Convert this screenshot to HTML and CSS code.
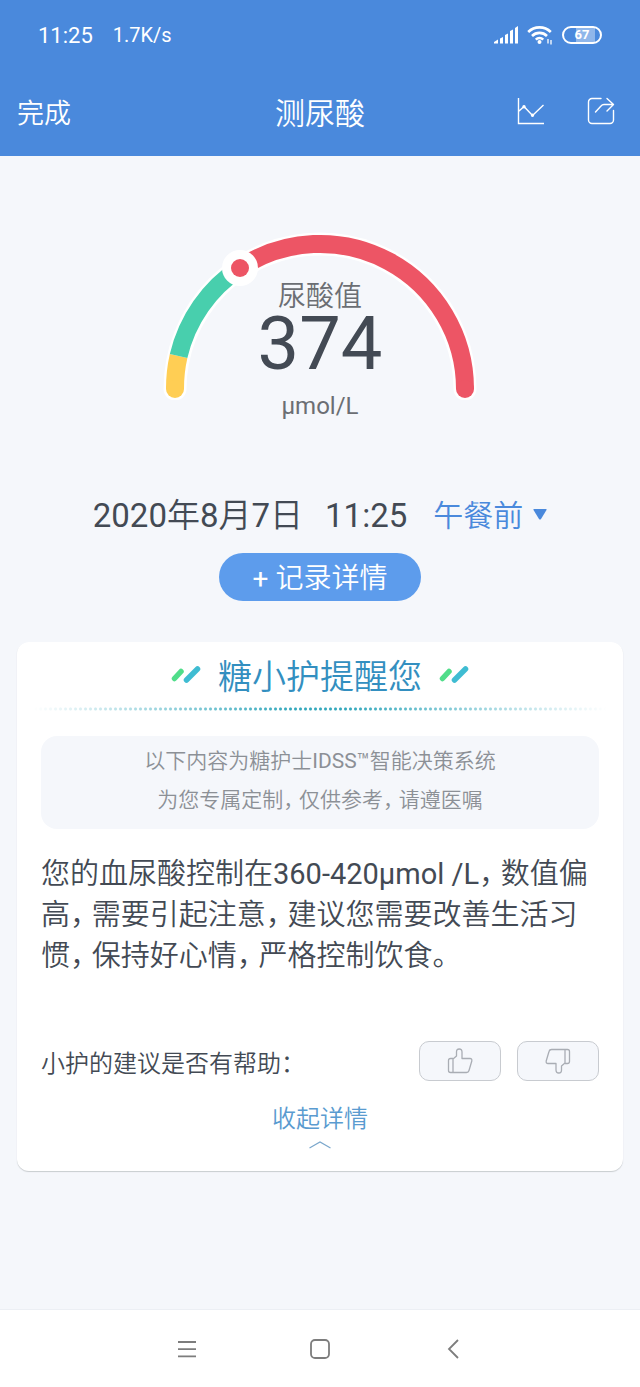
FILE: index.html
```html
<!DOCTYPE html>
<html lang="zh-CN">
  <head>
    <meta charset="UTF-8" />
    <meta name="viewport" content="width=device-width, initial-scale=1.0" />
    <title>测尿酸</title>
    <link rel="stylesheet" href="styles.css" />
  </head>
  <body>
    <header class="header">
      <div class="status-bar">
        <span class="status-time">11:25</span>
        <span class="status-speed">1.7K/s</span>
        <div class="status-icons">
          <svg width="24" height="18" viewBox="0 0 24 18" fill="#fff">
            <path d="M0 17.500v-1.500l4-2.500v4zM6 12.500l3-1.500v6.500H6zM11 9l3-1.500v10h-3zM16 5l3-1.500v14h-3zM21 2l3-2v17.500h-3z" />
          </svg>
          <svg width="26" height="20" viewBox="0 0 26 20" fill="none" stroke="#fff" stroke-width="2.600">
            <path d="M1.200 7a16 16 0 0 1 22.600 0M5 11a10.600 10.600 0 0 1 15 0M8.800 14.600a5.300 5.300 0 0 1 7.400 0" />
            <circle cx="12.500" cy="17" r="2" fill="#fff" stroke="none" />
            <path d="M21 14v4.500M24 15v4.500" stroke-width="1.300" />
          </svg>
          <span class="battery">67</span>
        </div>
      </div>

      <div class="title-bar">
        <button type="button" class="btn-done">完成</button>
        <h1 class="title">测尿酸</h1>
        <div class="title-actions">
          <button type="button" class="btn-icon" aria-label="趋势图">
            <svg width="28" height="28" viewBox="0 0 28 28" fill="none" stroke="#fff" stroke-width="1.400">
              <path d="M1.500 1v25.500H27M1.500 14.500l5.500-5 8.500 9L26.500 8" />
              <circle cx="7" cy="9.800" r="1" fill="#fff" />
              <circle cx="15.500" cy="18.300" r="1" fill="#fff" />
            </svg>
          </button>
          <button type="button" class="btn-icon" aria-label="分享">
            <svg width="28" height="28" viewBox="0 0 28 28" fill="none" stroke="#fff" stroke-width="1.400" stroke-linecap="round" stroke-linejoin="round">
              <path d="M14 1.500H5A3.500 3.500 0 0 0 1.500 5v18A3.500 3.500 0 0 0 5 26.500h18a3.500 3.500 0 0 0 3.500-3.500v-9.500" />
              <path d="M20 1.500l6.500 6L20 14M26 7.500H17a4 4 0 0 0-3 1.500l-5.500 6" />
            </svg>
          </button>
        </div>
      </div>
    </header>

    <main class="main">
      <section class="gauge">
        <svg width="320" height="180" viewBox="0 0 320 180" fill="none">
          <path d="M15 169a145 145 0 0 1 290 0" stroke="#fff" stroke-width="23" stroke-linecap="round" />
          <path d="M15 169a145 145 0 0 1 3.600-33" stroke="#ffce54" stroke-width="18" />
          <circle cx="15" cy="169" r="9" fill="#ffce54" />
          <path d="M18.600 136A145 145 0 0 1 80 48" stroke="#48cfad" stroke-width="18" />
          <path d="M80 48A145 145 0 0 1 305 169" stroke="#ed5565" stroke-width="18" />
          <circle cx="305" cy="169" r="9" fill="#ed5565" />
          <circle cx="80" cy="48" r="18" fill="#fff" />
          <circle cx="80" cy="48" r="9" fill="#ed5565" />
        </svg>
        <div class="gauge-text">
          <span class="gauge-name">尿酸值</span>
          <strong class="gauge-value">374</strong>
          <span class="gauge-unit">μmol/L</span>
        </div>
      </section>

      <div class="record">
        <time class="record-date">2020年8月7日</time>
        <time class="record-time">11:25</time>
        <label class="meal">
          <select class="meal-select" aria-label="时段">
            <option>午餐前</option>
            <option>午餐后</option>
          </select>
          <svg class="meal-arrow" width="14" height="11" viewBox="0 0 14 11" fill="#4a89dc">
            <path d="M1 0h12q1 0 .5 1L8 10q-1 1-2 0L.5 1Q0 0 1 0z" />
          </svg>
        </label>
      </div>
      <button type="button" class="btn-record">+ 记录详情</button>

      <section class="card">
        <div class="card-head">
          <svg width="30" height="18" viewBox="0 0 30 18" fill="none" stroke-width="5.500" stroke-linecap="round">
            <path d="M3.500 13.500L10 6.500" stroke="#50dd8a" />
            <path d="M15.500 15L26.500 4" stroke="#3fbcd2" />
          </svg>
          <h2 class="card-title">糖小护提醒您</h2>
          <svg width="30" height="18" viewBox="0 0 30 18" fill="none" stroke-width="5.500" stroke-linecap="round">
            <path d="M3.500 13.500L10 6.500" stroke="#50dd8a" />
            <path d="M15.500 15L26.500 4" stroke="#3fbcd2" />
          </svg>
        </div>
        <div class="dots"></div>

        <p class="notice">
          以下内容为糖护士IDSS™智能决策系统<br />
          为您专属定制， 仅供参考， 请遵医嘱
        </p>

        <p class="advice">
          您的血尿酸控制在360-420μmol /L， 数值偏高， 需要引起注意， 建议您需要改善生活习惯， 保持好心情， 严格控制饮食。
        </p>

        <div class="feedback">
          <span class="feedback-text">小护的建议是否有帮助：</span>
          <button type="button" class="btn-vote" aria-label="有帮助">
            <svg width="26" height="26" viewBox="0 0 26 26" fill="none" stroke="#a9adb4" stroke-width="1.300" stroke-linejoin="round">
              <path d="M6 10.500H3.500Q1.500 10.500 1.500 12.500V22.500Q1.500 24.500 3.500 24.500H19.500Q21.500 24.500 22 22.500L24.800 13Q25.200 10.500 23 10.500H15V4Q15 1 12.200 1T9.500 4V8L6 11V24.500" />
            </svg>
          </button>
          <button type="button" class="btn-vote" aria-label="没帮助">
            <svg class="icon-down" width="26" height="26" viewBox="0 0 26 26" fill="none" stroke="#a9adb4" stroke-width="1.300" stroke-linejoin="round">
              <path d="M6 10.500H3.500Q1.500 10.500 1.500 12.500V22.500Q1.500 24.500 3.500 24.500H19.500Q21.500 24.500 22 22.500L24.800 13Q25.200 10.500 23 10.500H15V4Q15 1 12.200 1T9.500 4V8L6 11V24.500" />
            </svg>
          </button>
        </div>

        <button type="button" class="btn-fold">
          收起详情
          <svg width="22" height="8" viewBox="0 0 22 8" fill="none" stroke="#7aa7cc" stroke-width="1.200">
            <path d="M.5 7L11 1l10.500 6" />
          </svg>
        </button>
      </section>
    </main>

    <nav class="nav">
      <button type="button" class="btn-icon" aria-label="菜单">
        <svg width="20" height="20" viewBox="0 0 20 20" stroke="#7d7d7d" stroke-width="1.800">
          <path d="M1 3h18M1 10.200h18M1 17.400h18" />
        </svg>
      </button>
      <button type="button" class="btn-icon" aria-label="主页">
        <svg width="20" height="20" viewBox="0 0 20 20" fill="none" stroke="#7d7d7d" stroke-width="1.800">
          <rect x="1" y="1" width="18" height="18" rx="4" />
        </svg>
      </button>
      <button type="button" class="btn-icon" aria-label="返回">
        <svg width="20" height="20" viewBox="0 0 20 20" fill="none" stroke="#7d7d7d" stroke-width="1.800">
          <path d="M15 1l-9 9 9 9" />
        </svg>
      </button>
    </nav>
  </body>
</html>
```
FILE: styles.css
```css
* {
  box-sizing: border-box;
  margin: 0;
  padding: 0;
}
body {
  display: flex;
  flex-direction: column;
  min-height: 100vh;
  background: #f5f7fb;
  color: #434a54;
  font-family: Roboto, "Noto Sans CJK SC DemiLight", "Noto Sans CJK SC", sans-serif;
}
button,
select {
  border: none;
  background: none;
  color: inherit;
  font: inherit;
  cursor: pointer;
}
svg {
  display: block;
  flex: none;
}

/* header */
.header {
  background: #4a89dc;
  color: #fff;
}
.status-bar {
  display: flex;
  align-items: center;
  gap: 20px;
  height: 66px;
  padding: 4px 38px 0;
  font-size: 22px;
}
.status-speed {
  font-size: 20px;
}
.status-icons {
  display: flex;
  align-items: center;
  gap: 9px;
  margin-left: auto;
}
.battery {
  width: 40px;
  height: 18px;
  border: 2px solid #fff;
  border-radius: 9px;
  background: linear-gradient(to right, transparent 33%, #8fb6ea 33%, #8fb6ea 85%, transparent 85%);
  font-size: 13px;
  font-weight: 700;
  line-height: 14px;
  text-align: center;
}
.title-bar {
  display: grid;
  grid-template-columns: 1fr auto 1fr;
  align-items: center;
  height: 90px;
  padding: 0 17px;
}
.btn-done {
  justify-self: start;
  font-size: 27px;
}
.title {
  font-size: 30px;
  font-weight: 400;
}
.title-actions {
  display: flex;
  justify-content: flex-end;
  gap: 42px;
  margin-right: 8px;
}

/* gauge */
.main {
  flex: 1;
  padding: 64px 17px;
}
.gauge {
  display: grid;
  justify-items: center;
}
.gauge > * {
  grid-area: 1 / 1;
}
.gauge-text {
  display: flex;
  flex-direction: column;
  align-items: center;
  padding-top: 60px;
  color: #6b6e73;
}
.gauge-name {
  font-size: 28px;
  line-height: 34px;
}
.gauge-value {
  color: #434a54;
  font-size: 74px;
  font-weight: 400;
  line-height: 60px;
}
.gauge-unit {
  margin-top: 16px;
  font-size: 24px;
  line-height: 32px;
}

/* record */
.record {
  display: flex;
  justify-content: center;
  align-items: center;
  margin-top: 70px;
  font-size: 33px;
  line-height: 48px;
}
.record-time {
  margin: 0 26px 0 22px;
}
.meal {
  display: flex;
  align-items: center;
  gap: 10px;
  color: #4a89dc;
}
.meal-select {
  appearance: none;
  font-size: 30px;
}
.meal-arrow {
  margin-bottom: 4px;
}
.btn-record {
  display: block;
  width: 202px;
  height: 48px;
  margin: 13px auto 0;
  padding-top: 4px;
  border-radius: 24px;
  background: #5d9cec;
  color: #fff;
  font-size: 28px;
  line-height: 44px;
}

/* card */
.card {
  margin-top: 41px;
  padding: 8px 24px 22px;
  border-radius: 12px;
  background: #fff;
  box-shadow: 0 1px 1px #c8cccf;
}
.card-head {
  display: flex;
  justify-content: center;
  align-items: center;
  gap: 17px;
  height: 48px;
}
.card-title {
  color: #338fc0;
  font-size: 34px;
  font-weight: 400;
}
.dots {
  height: 4px;
  margin: 9px -8px 0;
  background: radial-gradient(circle, #35a9bd 1px, transparent 2px) 0 0 / 5px 4px;
  -webkit-mask-image: linear-gradient(to right, transparent, #000 45%, #000 55%, transparent);
  mask-image: linear-gradient(to right, transparent, #000 45%, #000 55%, transparent);
}
.notice {
  margin-top: 25px;
  padding: 6px 0 9px;
  border-radius: 16px;
  background: #f5f7fb;
  color: #8c9096;
  font-size: 21px;
  line-height: 39px;
  text-align: center;
}
/* half-width punctuation */
.notice,
.advice {
  font-feature-settings: "halt";
}
.advice {
  margin-top: 25px;
  font-size: 29px;
  line-height: 41px;
}
.feedback {
  display: flex;
  align-items: center;
  gap: 16px;
  margin-top: 64px;
}
.feedback-text {
  margin-right: auto;
  font-size: 24px;
}
.btn-vote {
  display: flex;
  justify-content: center;
  align-items: center;
  width: 82px;
  height: 40px;
  border: 1px solid #c8cbd0;
  border-radius: 10px;
  background: #f5f7fb;
}
.icon-down {
  transform: rotate(180deg);
}
.btn-fold {
  display: flex;
  flex-direction: column;
  align-items: center;
  gap: 4px;
  margin: 20px auto 0;
  color: #5a9bd0;
  font-size: 24px;
  line-height: 36px;
}

/* bottom navigation */
.nav {
  display: flex;
  justify-content: center;
  align-items: center;
  gap: 113px;
  height: 78px;
  border-top: 1px solid #eceff4;
  background: #fff;
}
```
